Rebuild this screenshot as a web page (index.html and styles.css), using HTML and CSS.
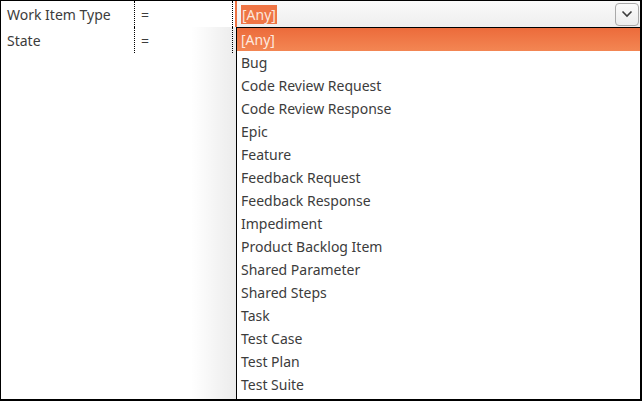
FILE: index.html
```html
<!DOCTYPE html>
<html>
<head>
<meta charset="utf-8">
<link rel="stylesheet" href="styles.css">
</head>
<body>
<div class="frame">
  <div class="grid">
    <div class="row">
      <div class="cell field">Work Item Type</div>
      <div class="cell op">=</div>
      <div class="cell value">
        <div class="combo">
          <span class="sel">[Any]</span>
          <span class="btn">
            <svg width="12" height="8" viewBox="0 0 12 8"><path d="M1.5 1.5 L6 6 L10.5 1.5" fill="none" stroke="#3c3c3c" stroke-width="1.6"/></svg>
          </span>
        </div>
      </div>
    </div>
    <div class="row row2">
      <div class="cell field">State</div>
      <div class="cell op">=</div>
      <div class="cell value"></div>
    </div>
  </div>
  <div class="shadow"></div>
  <ul class="popup">
    <li class="active">[Any]</li>
    <li>Bug</li>
    <li>Code Review Request</li>
    <li>Code Review Response</li>
    <li>Epic</li>
    <li>Feature</li>
    <li>Feedback Request</li>
    <li>Feedback Response</li>
    <li>Impediment</li>
    <li>Product Backlog Item</li>
    <li>Shared Parameter</li>
    <li>Shared Steps</li>
    <li>Task</li>
    <li>Test Case</li>
    <li>Test Plan</li>
    <li>Test Suite</li>
  </ul>
</div>
</body>
</html>
```
FILE: styles.css
```css
html, body {
  margin: 0;
  padding: 0;
  background: #ffffff;
}
.frame {
  position: relative;
  width: 642px;
  height: 401px;
  box-sizing: border-box;
  border-top: 1px solid #000;
  border-left: 1px solid #000;
  border-right: 2px solid #000;
  border-bottom: 2px solid #000;
  background: #fff;
  overflow: hidden;
  font-family: "Noto Sans", "DejaVu Sans", sans-serif;
  font-size: 14px;
  color: #3c3c3c;
}
.grid {
  display: flex;
  flex-direction: column;
}
.row {
  display: flex;
  height: 26px;
}
.row2 {
  height: 26px;
}
.cell {
  display: flex;
  align-items: center;
  box-sizing: border-box;
}
.field {
  width: 134px;
  padding-left: 6px;
  border-right: 1px dotted #000;
}
.op {
  width: 98px;
  padding-left: 6px;
  border-right: 1px dotted #000;
}
.value {
  flex: 1;
  padding-left: 2px;
  align-items: stretch;
}
.combo {
  flex: 1;
  display: flex;
  align-items: center;
  justify-content: space-between;
  box-sizing: border-box;
  border-left: 2px solid #ee7243;
  background: linear-gradient(#fafafa, #eeeeee);
  padding-left: 4px;
}
.sel {
  background: #ef7545;
  color: #fbe7dc;
  padding: 0 1px;
  line-height: 19px;
}
.btn {
  width: 24px;
  height: 23px;
  margin-right: 1px;
  box-sizing: border-box;
  border: 1px solid #a9a9a9;
  border-radius: 4px;
  background: linear-gradient(#fbfbfb, #ececec);
  display: flex;
  align-items: center;
  justify-content: center;
}
.shadow {
  position: absolute;
  left: 190px;
  top: 26px;
  width: 46px;
  bottom: 0;
  background: linear-gradient(to right, rgba(0,0,0,0), rgba(0,0,0,0.08));
}
.popup {
  position: absolute;
  left: 235px;
  top: 26px;
  right: 0;
  bottom: 0;
  margin: 0;
  padding: 0;
  list-style: none;
  background: #fff;
  border-left: 1px solid #000;
  border-top: 1px solid #000;
}
.popup li {
  height: 23px;
  line-height: 23px;
  padding-left: 4px;
}
.popup li.active {
  background: linear-gradient(#ec6b3b, #f38653);
  color: #fde9df;
}
```
